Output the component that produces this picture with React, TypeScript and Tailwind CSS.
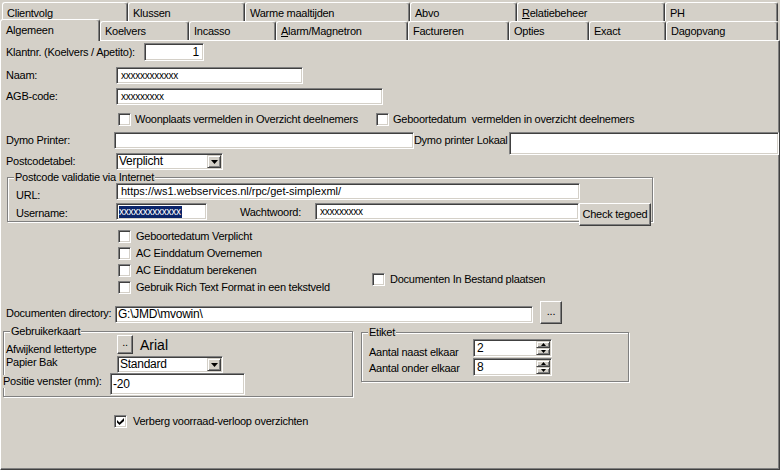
import React from "react";

// win9x 3D edges
const sunken =
  "border border-t-[#808080] border-l-[#808080] border-r-white border-b-white shadow-[inset_1px_1px_0_#404040,inset_-1px_-1px_0_#d4d0c8] bg-white";
const raised =
  "border border-t-white border-l-white border-r-[#404040] border-b-[#404040] shadow-[inset_-1px_-1px_0_#808080] bg-[#d4d0c8]";
const arrowBtn =
  "border border-t-[#d4d0c8] border-l-[#d4d0c8] border-r-[#404040] border-b-[#404040] shadow-[inset_1px_1px_0_#fff,inset_-1px_-1px_0_#808080] bg-[#d4d0c8]";
const groupCls =
  "min-w-0 border border-[#808080] shadow-[inset_1px_1px_0_#fff,1px_1px_0_#fff]";
const legendCls = "ml-[6px] bg-[#d4d0c8] px-[1px] leading-[13px]";

const topRow = [
  { label: "Clientvolg", w: "w-[126px]" },
  { label: "Klussen", w: "w-[117px]" },
  { label: "Warme maaltijden", w: "w-[165px]" },
  { label: "Abvo", w: "w-[107px]" },
  { label: "Relatiebeheer", w: "w-[148px]", ul: true },
  { label: "PH", w: "w-[113px]" },
];

const frontRow = [
  { label: "Koelvers", w: "w-[89px]" },
  { label: "Incasso", w: "w-[87px]" },
  { label: "Alarm/Magnetron", w: "w-[132px]", ul: true },
  { label: "Factureren", w: "w-[101px]" },
  { label: "Opties", w: "w-[80px]" },
  { label: "Exact", w: "w-[77px]" },
  { label: "Dagopvang", w: "w-[112px]" },
];

const tabCls =
  "flex shrink-0 items-center whitespace-nowrap rounded-t-[3px] border-t border-l border-r border-t-white border-l-white border-r-[#404040] bg-[#d4d0c8] pl-[4px] shadow-[inset_-1px_0_0_#808080]";

function TabLabel({ label, ul }: { label: string; ul?: boolean }) {
  if (!ul) return <>{label}</>;
  return (
    <>
      <span className="underline">{label[0]}</span>
      {label.slice(1)}
    </>
  );
}

function Tabs() {
  return (
    <div className="flex flex-col">
      <div className="ml-[2px] mt-[2px] flex h-[19px]">
        {topRow.map((t) => (
          <div key={t.label} className={`${tabCls} ${t.w} h-[19px] pt-[2px]`}>
            <TabLabel label={t.label} ul={t.ul} />
          </div>
        ))}
      </div>
      <div className="flex h-[19px] items-start">
        <div className={`${tabCls} relative z-10 -mt-[2px] h-[22px] w-[100px] pl-[5px]`}>
          Algemeen
        </div>
        {frontRow.map((t) => (
          <div key={t.label} className={`${tabCls} ${t.w} h-[19px]`}>
            <TabLabel label={t.label} ul={t.ul} />
          </div>
        ))}
      </div>
    </div>
  );
}

function Field({
  className = "",
  pad = "px-[4px]",
  children,
}: {
  className?: string;
  pad?: string;
  children?: React.ReactNode;
}) {
  return (
    <div
      className={`${sunken} flex shrink-0 items-center overflow-hidden whitespace-nowrap ${pad} ${className}`}
    >
      {children}
    </div>
  );
}

function Check({ checked }: { checked?: boolean }) {
  return (
    <span className={`${sunken} flex h-[13px] w-[13px] shrink-0 items-center justify-center`}>
      {checked && (
        <svg width="7" height="7" viewBox="0 0 7 7">
          <polygon points="0,2 2.5,4.5 7,0 7,3 2.5,7 0,4.5" fill="#000" />
        </svg>
      )}
    </span>
  );
}

function CheckRow({ label, checked, gap = "gap-[5px]" }: { label: string; checked?: boolean; gap?: string }) {
  return (
    <div className={`flex h-[17px] items-center whitespace-pre ${gap}`}>
      <Check checked={checked} />
      <span>{label}</span>
    </div>
  );
}

function Combo({ value, className = "" }: { value: string; className?: string }) {
  return (
    <div className={`${sunken} flex shrink-0 items-stretch p-[1px] ${className}`}>
      <span className="flex flex-1 items-center pl-[1px] text-[12px]">{value}</span>
      <span className={`${arrowBtn} flex w-[14px] items-center justify-center`}>
        <svg width="7" height="4" viewBox="0 0 7 4">
          <polygon points="0,0 7,0 3.5,4" fill="#000" />
        </svg>
      </span>
    </div>
  );
}

function Spin({ value }: { value: string }) {
  return (
    <div className={`${sunken} flex h-[18px] w-[79px] shrink-0 items-stretch p-[1px]`}>
      <span className="flex flex-1 items-center pl-[2px] text-[12px]">{value}</span>
      <span className="flex w-[14px] flex-col">
        <span className={`${arrowBtn} flex flex-1 items-center justify-center`}>
          <svg width="5" height="3" viewBox="0 0 5 3">
            <polygon points="2.5,0 5,3 0,3" fill="#000" />
          </svg>
        </span>
        <span className={`${arrowBtn} flex flex-1 items-center justify-center`}>
          <svg width="5" height="3" viewBox="0 0 5 3">
            <polygon points="0,0 5,0 2.5,3" fill="#000" />
          </svg>
        </span>
      </span>
    </div>
  );
}

export default function App() {
  return (
    <div className="h-[470px] w-[780px] overflow-hidden bg-[#d4d0c8] font-['Liberation_Sans',Arial,sans-serif] text-[11px] leading-[13px] tracking-[-0.25px] text-black">
      <Tabs />

      <div className="flex h-[430px] w-[780px] flex-col border border-t-white border-l-white border-r-[#404040] border-b-[#404040] shadow-[inset_-1px_-1px_0_#808080]">
        {/* klantgegevens */}
        <div className="mt-[2px] flex h-[18px] items-center">
          <span className="ml-[5px] w-[138px] whitespace-nowrap">Klantnr. (Koelvers / Apetito):</span>
          <Field className="h-[18px] w-[60px] justify-end text-[12px]">1</Field>
        </div>
        <div className="mt-[6px] flex h-[17px] items-center">
          <span className="ml-[5px] w-[110px]">Naam:</span>
          <Field className="h-[17px] w-[187px] text-[10px]">xxxxxxxxxxxx</Field>
        </div>
        <div className="mt-[4px] flex h-[17px] items-center">
          <span className="ml-[5px] w-[110px]">AGB-code:</span>
          <Field className="h-[17px] w-[267px] text-[10px]">xxxxxxxxx</Field>
        </div>
        <div className="ml-[117px] mt-[6px] flex h-[17px]">
          <div className="w-[258px]">
            <CheckRow label="Woonplaats vermelden in Overzicht deelnemers" gap="gap-[4px]" />
          </div>
          <CheckRow label="Geboortedatum  vermelden in overzicht deelnemers" gap="gap-[4px]" />
        </div>

        {/* printers */}
        <div className="mt-[4px] flex h-[17px] items-start">
          <span className="ml-[5px] flex h-[17px] w-[110px] items-center">Dymo Printer:</span>
          <Field className="h-[17px] w-[300px]" />
          <span className="flex h-[17px] w-[97px] items-center whitespace-nowrap">Dymo printer Lokaal</span>
          <Field className="h-[23px] w-[270px]" />
        </div>
        <div className="mt-[4px] flex h-[17px] items-center">
          <span className="ml-[5px] w-[110px]">Postcodetabel:</span>
          <Combo value="Verplicht" className="h-[17px] w-[107px]" />
        </div>

        {/* postcode webservice */}
        <fieldset className={`${groupCls} ml-[6px] mt-[1px] w-[646px] pb-[1px]`}>
          <legend className={legendCls}>Postcode validatie via Internet</legend>
          <div className="-mt-[1px] flex h-[17px] items-start">
            <span className="ml-[8px] flex h-[17px] w-[100px] items-center pt-[7px]">URL:</span>
            <Field className="h-[17px] w-[464px] tracking-normal">https://ws1.webservices.nl/rpc/get-simplexml/</Field>
          </div>
          <div className="mt-[3px] flex h-[17px] items-start">
            <span className="ml-[8px] flex h-[17px] w-[100px] items-center pt-[3px]">Username:</span>
            <Field className="h-[17px] w-[91px] text-[10px]" pad="px-[2px]">
              <span className="block h-[12px] w-[63px] shrink-0 overflow-hidden bg-[#0a246a] leading-[12px] text-white">
                xxxxxxxxxxxxx
              </span>
            </Field>
            <span className="ml-[33px] flex h-[17px] w-[75px] items-center pt-[1px]">Wachtwoord:</span>
            <Field className="h-[17px] w-[264px] text-[10px]">xxxxxxxxx</Field>
            <div className={`${raised} flex h-[23px] w-[72px] shrink-0 items-center justify-center whitespace-nowrap`}>
              Check tegoed
            </div>
          </div>
        </fieldset>

        {/* opties */}
        <div className="ml-[117px] mt-[6px] flex">
          <div className="flex w-[254px] flex-col">
            <CheckRow label="Geboortedatum Verplicht" />
            <CheckRow label="AC Einddatum Overnemen" />
            <CheckRow label="AC Einddatum berekenen" />
            <CheckRow label="Gebruik Rich Text Format in een tekstveld" />
          </div>
          <div className="mt-[43px]">
            <CheckRow label="Documenten In Bestand plaatsen" />
          </div>
        </div>

        <div className="mt-[5px] flex h-[23px] items-start">
          <span className="ml-[5px] flex h-[23px] w-[109px] items-center pt-[2px] whitespace-nowrap">
            Documenten directory:
          </span>
          <Field className="mt-[5px] h-[17px] w-[418px] text-[12px]" pad="px-[2px]">
            {"G:\\JMD\\mvowin\\"}
          </Field>
          <div className={`${raised} ml-[7px] flex h-[23px] w-[22px] items-end justify-center pb-[5px]`}>...</div>
        </div>

        {/* gebruikerkaart + etiket */}
        <div className="mt-[1px] flex items-start">
          <fieldset className={`${groupCls} ml-[2px] w-[350px] pb-[1px]`}>
            <legend className={legendCls}>Gebruikerkaart</legend>
            <div className="-mt-[3px] flex h-[19px]">
              <span className="-mb-[2px] ml-[2px] w-[111px] self-end whitespace-nowrap">Afwijkend lettertype</span>
              <div className={`${raised} flex h-[19px] w-[16px] items-end justify-center pb-[4px]`}>..</div>
              <span className="ml-[7px] self-center text-[14px] leading-[16px] tracking-normal">Arial</span>
            </div>
            <div className="mt-[2px] flex h-[17px]">
              <span className="ml-[2px] w-[111px]">Papier Bak</span>
              <Combo value="Standard" className="h-[17px] w-[106px]" />
            </div>
            <div className="flex h-[22px]">
              <span className="relative -ml-[1px] mt-[2px] h-[13px] w-[107px] bg-[#d4d0c8] whitespace-nowrap">
                Positie venster (mm):
              </span>
              <Field className="h-[22px] w-[135px] text-[12px]" pad="px-[2px]">-20</Field>
            </div>
          </fieldset>

          <fieldset className={`${groupCls} ml-[8px] mt-[1px] w-[268px] pb-[5px]`}>
            <legend className={legendCls}>Etiket</legend>
            <div className="flex h-[18px]">
              <span className="-mb-[2px] ml-[7px] w-[104px] self-end whitespace-nowrap">Aantal naast elkaar</span>
              <Spin value="2" />
            </div>
            <div className="mt-[1px] flex h-[18px]">
              <span className="mb-[1px] ml-[7px] w-[104px] self-end whitespace-nowrap">Aantal onder elkaar</span>
              <Spin value="8" />
            </div>
          </fieldset>
        </div>

        <div className="ml-[113px] mt-[18px] flex h-[13px] items-center">
          <CheckRow label="Verberg voorraad-verloop overzichten" checked gap="gap-[6px]" />
        </div>
      </div>
    </div>
  );
}
